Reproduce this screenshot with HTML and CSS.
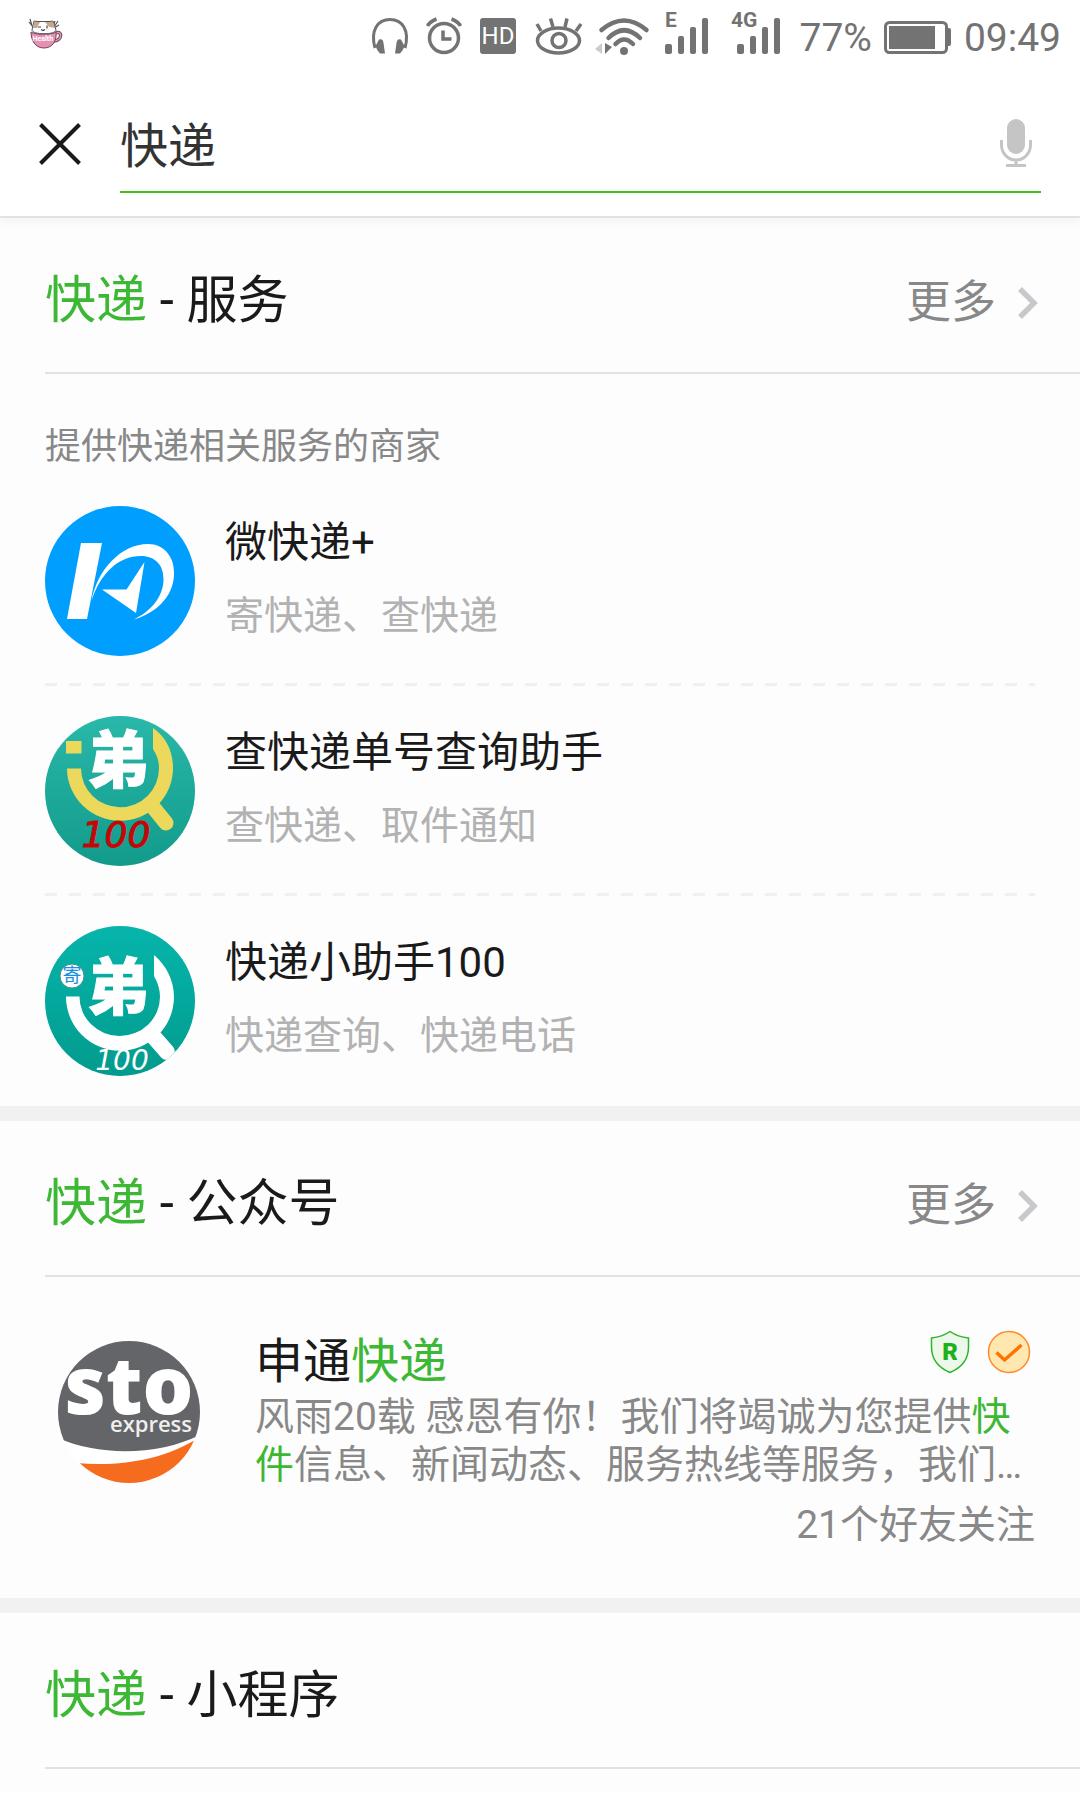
FILE: index.html
```html
<!DOCTYPE html>
<html lang="zh-CN">
<head>
<meta charset="utf-8">
<meta name="viewport" content="width=device-width, initial-scale=1">
<title>快递 - 搜索</title>
<link rel="stylesheet" href="styles.css">
</head>
<body>
<div class="status-bar">
  <svg class="status-app" viewBox="0 0 36 36" aria-hidden="true">
    <path d="M2 1 4 8M1 4 5 9M27 3 25 9M30 3 26 9M31 7 26 10" stroke="#555" stroke-width="1.2" fill="none"/>
    <path d="M6 3 9 3.500H22L25 3 28 12C28 17 4 17 4 12Z" fill="#fff" stroke="#555" stroke-width="1"/>
    <path d="M6 4 12 4 9 10 5 10ZM17 4H25L27 10 21 9Z" fill="#c9a78f"/>
    <path d="M10 9h3M19 7.500v3M13 11.500l2 1 2-1" stroke="#444" stroke-width="1.200" fill="none"/>
    <path d="M28 15C34 12 35 22 26 23" fill="none" stroke="#6b4a58" stroke-width="3.500"/>
    <path d="M28 15C34 12 35 22 26 23" fill="none" stroke="#e88fb4" stroke-width="1.500"/>
    <path d="M3 14C7 17 25 17 28 14C29 22 25 30 16 30C7 30 3 22 3 14Z" fill="#e88fb4" stroke="#6b4a58" stroke-width="1"/>
    <text x="4.500" y="23" class="cup-text">Health</text>
  </svg>
  <div class="status-icons">
    <svg width="44" height="72" viewBox="369 0 44 72" aria-hidden="true">
      <path d="M376 48C371 30 379 19.500 391 19.500S411 30 406 48" fill="none" stroke="#737373" stroke-width="3"/>
      <path d="M380 39.500Q384 38 384.500 43L386 53.500H381Q378 51 376.500 46ZM402 39.500Q398 38 397.500 43L396 53.500H401Q404 51 405.500 46Z"/>
    </svg>
    <svg width="44" height="72" viewBox="423 0 44 72" aria-hidden="true">
      <g fill="none" stroke="#737373" stroke-width="3.500">
        <circle cx="445" cy="38" r="14.500"/>
        <path d="M444 30.500V39H452.500M428.500 26Q431 21.500 437.500 19M461.500 26Q459 21.500 452.500 19"/>
      </g>
    </svg>
    <svg width="44" height="72" viewBox="477 0 44 72" aria-hidden="true">
      <rect x="481" y="18" width="36" height="36" rx="3"/>
      <text x="499" y="44" class="hd-text">HD</text>
    </svg>
    <svg width="54" height="72" viewBox="531 0 54 72" aria-hidden="true">
      <g fill="none" stroke="#737373" stroke-width="3.500">
        <ellipse cx="559.500" cy="40.500" rx="21" ry="12.500"/>
        <circle cx="560" cy="40.500" r="7"/>
        <path d="M538 24 542 31M551.500 18.500 554 27M568 18.500 566 27M582 24 577 31"/>
      </g>
    </svg>
    <svg width="57" height="72" viewBox="595 0 57 72" aria-hidden="true">
      <path d="M596 49 603 43V54Z" fill="#ccc"/>
      <path d="M606 43 613 47 606 54Z"/>
      <g fill="none" stroke="#737373" stroke-width="4.500" stroke-linecap="round">
        <path d="M602.500 30Q625 11 647.500 30M609.500 38Q625 22.500 641 38M616.500 44Q625 35 634 44"/>
      </g>
      <circle cx="625" cy="51" r="4"/>
    </svg>
    <svg width="54" height="72" viewBox="662 0 54 72" aria-hidden="true">
      <text x="666" y="27" class="net-text">E</text>
      <rect x="666" y="44" width="7" height="10" rx="2"/><rect x="679" y="36" width="6" height="18" rx="2"/><rect x="691" y="27" width="6" height="27" rx="2"/><rect x="703" y="18" width="6" height="36" rx="2"/>
    </svg>
    <svg width="64" height="72" viewBox="726 0 64 72" aria-hidden="true">
      <text x="732" y="27" class="net-text">4G</text>
      <rect x="738" y="44" width="7" height="10" rx="2"/><rect x="751" y="36" width="6" height="18" rx="2"/><rect x="763" y="27" width="6" height="27" rx="2"/><rect x="775" y="18" width="6" height="36" rx="2"/>
    </svg>
    <span class="status-value">77%</span>
    <svg width="72" height="72" viewBox="882 0 72 72" aria-hidden="true">
      <rect x="885.500" y="22.500" width="61" height="30" rx="4" fill="none" stroke="#737373" stroke-width="3"/>
      <path d="M889 26H935V49H889ZM948 28H949Q951 28 951 30V44Q951 46 949 46H948Z"/>
    </svg>
    <time class="status-value">09:49</time>
  </div>
</div>

<header class="search-bar">
  <button class="close-button" type="button" aria-label="关闭">
    <svg width="44" height="44" viewBox="0 0 44 44"><path d="M2.500 2.500 41.500 41.500M41.500 2.500 2.500 41.500" stroke="#1a1a1a" stroke-width="4" fill="none"/></svg>
  </button>
  <form class="search-field">
    <input class="search-input" type="text" value="快递" aria-label="搜索">
    <button class="mic-button" type="button" aria-label="语音搜索">
      <svg width="34" height="48" viewBox="0 0 34 48"><rect x="8" y="0" width="18" height="35" rx="9" fill="#c5c5c5"/><path d="M2.500 21V26A14.500 15 0 0 0 31.500 26V21M17 41V46M7 46.500H27" fill="none" stroke="#c5c5c5" stroke-width="3"/></svg>
    </button>
  </form>
</header>

<main>
  <section class="section">
    <div class="section-head">
      <h2 class="section-title"><em>快递</em> - 服务</h2>
      <a class="more" href="#services">更多
        <svg width="22" height="34" viewBox="0 0 22 34" aria-hidden="true"><path d="M3 3 17 17 3 31" fill="none" stroke="#c8c8cc" stroke-width="5.500"/></svg>
      </a>
    </div>
    <p class="hint">提供快递相关服务的商家</p>
    <ul class="services">
      <li class="service">
        <a class="service-link" href="#wkd">
          <svg class="service-logo" viewBox="0 0 150 150" aria-hidden="true">
            <circle cx="75" cy="75" r="75" fill="#009fff"/>
            <path d="M36 37H57L42 113H22Z" fill="#fff"/>
            <path d="M46.500 95C52 64 76 38 103 38C119 38 130 51 129 69C128 92 110 107 89 113.500C106 105 118 91 118.500 74C119 59 110 50 96 50C73 50 55 68 46.500 95Z" fill="#fff"/>
            <path d="M99.500 56 91 107 57 83.500H81.500Z" fill="#fff"/>
          </svg>
          <span class="service-text"><strong class="service-name">微快递+</strong><span class="service-desc">寄快递、查快递</span></span>
        </a>
      </li>
      <li class="service">
        <a class="service-link" href="#helper">
          <svg class="service-logo" viewBox="0 0 150 150" aria-hidden="true">
            <defs><linearGradient id="teal-a" x1="0" y1="0" x2="0" y2="1"><stop offset="0" stop-color="#29b8a9"/><stop offset="1" stop-color="#129b8b"/></linearGradient></defs>
            <circle cx="75" cy="75" r="75" fill="url(#teal-a)"/>
            <path d="M21 25H36.500V37.500H21Z" fill="#ecd95c"/>
            <path d="M22 52.500A53 52.500 0 0 0 128 52C128 35 121 21 108 12V33C112 39 114 45 114 52A39 39 0 0 1 36 52.500Z" fill="#ecd95c"/>
            <path d="M108 91 121 107" stroke="#ecd95c" stroke-width="15" stroke-linecap="round"/>
            <text x="73" y="67" class="logo-di">弟</text>
            <text x="71" y="131" class="logo-100 red">100</text>
          </svg>
          <span class="service-text"><strong class="service-name">查快递单号查询助手</strong><span class="service-desc">查快递、取件通知</span></span>
        </a>
      </li>
      <li class="service">
        <a class="service-link" href="#assistant">
          <svg class="service-logo" viewBox="0 0 150 150" aria-hidden="true">
            <defs><linearGradient id="teal-b" x1="0" y1="0" x2="0" y2="1"><stop offset="0" stop-color="#06b5ab"/><stop offset="1" stop-color="#029b8d"/></linearGradient><clipPath id="disc"><circle cx="75" cy="75" r="75"/></clipPath></defs>
            <circle cx="75" cy="75" r="75" fill="url(#teal-b)"/>
            <g clip-path="url(#disc)">
              <path d="M21 70.500A53.500 53.500 0 0 0 129 71C129 54 121 39 109 29V50C113 57 115 64 115 71A40 39 0 0 1 34.500 70.500Z" fill="#fff"/>
              <path d="M108 110 122 126" stroke="#fff" stroke-width="16" stroke-linecap="round"/>
            </g>
            <circle cx="27" cy="50" r="12" fill="#fff" stroke="#4a8f8a" stroke-width="1"/>
            <text x="27" y="56" class="logo-ji">寄</text>
            <text x="73" y="84" class="logo-di">弟</text>
            <text x="77" y="144" class="logo-100 small">100</text>
          </svg>
          <span class="service-text"><strong class="service-name">快递小助手100</strong><span class="service-desc">快递查询、快递电话</span></span>
        </a>
      </li>
    </ul>
  </section>

  <section class="section">
    <div class="section-head">
      <h2 class="section-title"><em>快递</em> - 公众号</h2>
      <a class="more" href="#accounts">更多
        <svg width="22" height="34" viewBox="0 0 22 34" aria-hidden="true"><path d="M3 3 17 17 3 31" fill="none" stroke="#c8c8cc" stroke-width="5.500"/></svg>
      </a>
    </div>
    <a class="account" href="#sto">
      <svg class="account-logo" viewBox="0 0 142 142" aria-hidden="true">
        <defs><clipPath id="sto-disc"><circle cx="71" cy="71" r="71"/></clipPath></defs>
        <g clip-path="url(#sto-disc)">
          <rect width="142" height="142" fill="#fff"/>
          <path d="M0 0H142V94C100 115 40 115 0 97Z" fill="#646569"/>
          <path d="M18 122C62 126 106 119 142 96V142H18Z" fill="#f56c1f"/>
        </g>
        <text x="71" y="73" class="sto-name">sto</text>
        <text x="93" y="91" class="sto-sub">express</text>
      </svg>
      <span class="account-body">
        <span class="account-top">
          <strong class="account-name">申通<em>快递</em></strong>
          <span class="badges">
            <svg width="40" height="44" viewBox="0 0 40 44" aria-hidden="true"><path d="M20 1.500Q28 7 38.500 8V17C38.500 28 33 37 20 42.500C7 37 1.500 28 1.500 17V8Q12 7 20 1.500Z" fill="#ecf8ea" stroke="#2fb52b" stroke-width="1.500"/><text x="20" y="30" class="shield-text">R</text></svg>
            <svg width="44" height="44" viewBox="0 0 44 44" aria-hidden="true"><circle cx="22" cy="22" r="20.500" fill="#ffe8b0" stroke="#ff8a2b" stroke-width="1.500"/><path d="M9.500 22.500 17.500 30 34.500 15" fill="none" stroke="#ff7300" stroke-width="3.500"/></svg>
          </span>
        </span>
        <span class="account-desc">风雨20载 感恩有你！我们将竭诚为您提供<em>快件</em>信息、新闻动态、服务热线等服务，我们…</span>
        <span class="account-count">21个好友关注</span>
      </span>
    </a>
  </section>

  <section class="section">
    <div class="section-head">
      <h2 class="section-title"><em>快递</em> - 小程序</h2>
    </div>
  </section>
</main>
</body>
</html>
```
FILE: styles.css
```css
* { box-sizing: border-box; }

body {
  margin: 0;
  background: #fdfdfd;
  color: #1a1a1a;
  font-family: Roboto, "Noto Sans CJK SC", sans-serif;
}

h2, p, ul { margin: 0; padding: 0; }
ul { list-style: none; }
a { color: inherit; text-decoration: none; }
em { color: #3cb835; font-style: normal; }
strong { font-weight: 400; }
svg { display: block; flex: none; }
button { padding: 0; border: 0; background: none; }

.status-bar {
  display: flex;
  justify-content: space-between;
  align-items: center;
  height: 72px;
  padding: 0 19px 0 28px;
  background: #fff;
}
.status-app { width: 36px; height: 36px; }
.status-icons {
  display: flex;
  align-items: center;
  gap: 10px;
  color: #737373;
  fill: #737373;
  font-size: 39px;
  line-height: 48px;
}
.status-value { padding-top: 4px; }
.cup-text { font: bold 7px Roboto, sans-serif; fill: #fff; }
.hd-text { font: 24px Roboto, sans-serif; fill: #fff; text-anchor: middle; }
.net-text { font: bold 21px Roboto, sans-serif; }

.search-bar {
  display: flex;
  align-items: center;
  gap: 38px;
  height: 146px;
  padding: 0 39px 0 38px;
  background: #fff;
  border-bottom: 2px solid #e2e2e2;
  box-shadow: 0 6px 6px rgba(0, 0, 0, 0.03);
}
.search-field {
  display: flex;
  flex: 1;
  align-items: center;
  height: 98px;
  padding-right: 8px;
  border-bottom: 2px solid #45c01a;
}
.search-input {
  flex: 1;
  min-width: 0;
  height: 72px;
  padding: 0 0 2px;
  border: 0;
  outline: 0;
  background: none;
  color: #333;
  font: inherit;
  font-size: 48px;
}

.section + .section { border-top: 15px solid #f1f1f1; }
.section-head {
  display: flex;
  justify-content: space-between;
  align-items: center;
  height: 156px;
  margin-left: 45px;
  padding: 11px 41px 0 0;
  border-bottom: 2px solid #e2e2e2;
}
.section-title { font-size: 51px; font-weight: 400; line-height: 72px; }
.more {
  display: flex;
  align-items: center;
  gap: 21px;
  padding-top: 5px;
  color: #888;
  font-size: 45px;
  line-height: 72px;
}

.hint {
  padding: 49px 45px 5px;
  color: #888;
  font-size: 36px;
  line-height: 48px;
}
.service { margin: 0 45px; padding: 30px 0; }
.service:not(:last-child) {
  background: repeating-linear-gradient(90deg, #f0f0f0 0 12px, transparent 12px 24px) left bottom / 100% 3px no-repeat;
}
.service-link { display: flex; align-items: center; gap: 30px; }
.service-logo { width: 150px; height: 150px; }
.service-text { display: flex; flex-direction: column; gap: 13px; padding-bottom: 3px; }
.service-name { font-size: 42px; line-height: 60px; }
.service-desc { color: #b2b2b2; font-size: 39px; line-height: 60px; }

.logo-di { font: 900 62px "Noto Sans CJK SC", sans-serif; fill: #fff; stroke: #fff; stroke-width: 1px; text-anchor: middle; }
.logo-ji { font: 19px "Noto Sans CJK SC", sans-serif; fill: #1a8fe0; text-anchor: middle; }
.logo-100 { font: italic 36px "DejaVu Sans", sans-serif; text-anchor: middle; }
.red { fill: #c60606; stroke: #c60606; stroke-width: 1px; }
.small { font-size: 28px; fill: #fff; }

.account {
  display: flex;
  gap: 55px;
  padding: 53px 45px 49px 58px;
}
.account-logo { width: 142px; height: 142px; margin-top: 11px; }
.account-body { display: flex; flex: 1; flex-direction: column; }
.account-top { display: flex; justify-content: space-between; align-items: flex-start; padding-right: 4px; }
.badges { display: flex; gap: 17px; }
.account-name { font-size: 48px; line-height: 63px; }
.account-desc { color: #888; font-size: 39px; line-height: 48px; }
.account-count { margin-top: 12px; color: #888; font-size: 39px; line-height: 48px; text-align: right; }

.sto-name { font: 800 80px "Open Sans", sans-serif; fill: #fff; text-anchor: middle; }
.sto-sub { font: 600 22px "Open Sans", sans-serif; fill: #eee; text-anchor: middle; }
.shield-text { font: 900 24px Roboto, sans-serif; fill: #1fb01a; text-anchor: middle; }
```
